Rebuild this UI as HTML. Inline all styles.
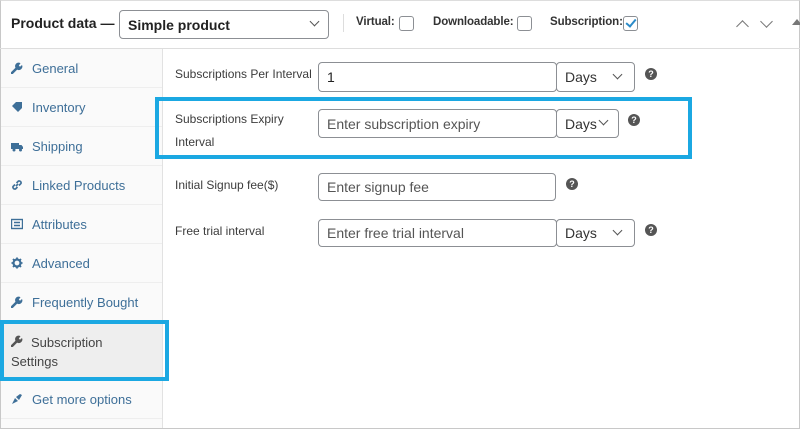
<!DOCTYPE html>
<html><head><style>
*{box-sizing:border-box;margin:0;padding:0}
body{width:800px;height:429px;background:#fff;font-family:"Liberation Sans",sans-serif;position:relative;overflow:hidden;color:#333}
.a{position:absolute}
.frame{left:0;top:0;width:800px;height:429px;border:1px solid #c8c8c8;border-top:1px solid #ddd}
.hdr{left:0;top:0;width:800px;height:49px;border-bottom:1px solid #ddd}
.side{left:1px;top:49px;width:162px;height:379px;background:#fafafa;border-right:1px solid #e2e2e2}
.item{position:absolute;left:0;width:161px;border-bottom:1px solid #eee;font-size:13px;color:#3e6f98;padding-left:31px}
.ic{position:absolute;left:10px;top:13px;width:12px;height:12px}
.lbl{font-size:12px;color:#3c3c3c}
.inp{border:1px solid #8c8f94;border-radius:4px;background:#fff;font-size:14px;color:#555;padding-left:8px;display:flex;align-items:center}
.sel{border:1px solid #8c8f94;border-radius:4px;background:#fff;font-size:14px;color:#333;padding-left:8px;display:flex;align-items:center}
.chev{position:absolute;width:7px;height:7px;border-right:1.5px solid #555;border-bottom:1.5px solid #555;transform:rotate(45deg)}
.q{width:12px;height:12px;border-radius:50%;background:#555;color:#fff;font-size:9px;font-weight:bold;text-align:center;line-height:12px}
.cb{width:15px;height:15px;border:1px solid #8c8f94;border-radius:3px;background:#fff}
.blue{border:4px solid #1ba8e2}
.hl{font-size:11.5px;font-weight:bold;color:#333;letter-spacing:-0.1px}
</style></head><body>
<svg width="0" height="0" style="position:absolute"><defs>
<g id="w"><path d="M1 11 L6 6" stroke="currentColor" stroke-width="2.6" stroke-linecap="round"/><path d="M5 6.5 A3.5 3.5 0 0 1 9.5 1.2 L7.8 3.5 L9 4.8 L11 3 A3.5 3.5 0 0 1 6 7.5Z" fill="currentColor"/></g>
</defs></svg>
<div class="a frame"></div>
<div class="a hdr"></div>
<div class="a" style="left:11px;top:15px;font-size:14px;font-weight:bold;color:#222">Product data —</div>
<div class="a sel" style="left:119px;top:10px;width:210px;height:29px;font-weight:bold;font-size:14px;color:#222">Simple product</div>
<div class="a chev" style="left:311px;top:18px"></div>
<div class="a" style="left:343px;top:14px;width:1px;height:18px;background:#ddd"></div>
<div class="a hl" style="left:356px;top:16px">Virtual:</div>
<div class="a cb" style="left:399px;top:16px"></div>
<div class="a hl" style="left:433px;top:16px">Downloadable:</div>
<div class="a cb" style="left:517px;top:16px"></div>
<div class="a hl" style="left:550px;top:16px">Subscription:</div>
<div class="a cb" style="left:623px;top:16px"></div>
<div class="a" style="left:628px;top:17px;width:6px;height:10px;border-right:2px solid #2b8bc9;border-bottom:2px solid #2b8bc9;transform:rotate(40deg)"></div>
<div class="a" style="left:738px;top:22px;width:9px;height:9px;border-left:1.5px solid #777;border-top:1.5px solid #777;transform:rotate(45deg)"></div>
<div class="a" style="left:762px;top:17px;width:9px;height:9px;border-right:1.5px solid #777;border-bottom:1.5px solid #777;transform:rotate(45deg)"></div>
<div class="a" style="left:792px;top:19px;width:0;height:0;border-left:5px solid transparent;border-right:5px solid transparent;border-bottom:6px solid #777"></div>

<div class="a side">
<div class="item" style="top:0;height:39px;padding-top:12px"><svg class="ic" viewBox="0 0 12 12" style="color:#3e6f98"><use href="#w"/></svg>General</div>
<div class="item" style="top:39px;height:39px;padding-top:12px"><svg class="ic" viewBox="0 0 12 12"><path d="M1 5 L5 1 L11 1 L11 7 L7 11Z" fill="#3e6f98" transform="rotate(0)"/></svg>Inventory</div>
<div class="item" style="top:78px;height:39px;padding-top:12px"><svg class="ic" viewBox="0 0 12 12"><rect x="0" y="3" width="8" height="6" fill="#3e6f98"/><path d="M8 5h2.5l1.5 2v2H8z" fill="#3e6f98"/><circle cx="3" cy="10" r="1.5" fill="#3e6f98"/><circle cx="9.5" cy="10" r="1.5" fill="#3e6f98"/></svg>Shipping</div>
<div class="item" style="top:117px;height:39px;padding-top:12px"><svg class="ic" viewBox="0 0 12 12"><path d="M5 7 L7 5 M4 5.5 L2 7.5 A2 2 0 0 0 4.5 10 L6.5 8 M8 6.5 L10 4.5 A2 2 0 0 0 7.5 2 L5.5 4" stroke="#3e6f98" stroke-width="1.6" fill="none"/></svg>Linked Products</div>
<div class="item" style="top:156px;height:39px;padding-top:12px"><svg class="ic" viewBox="0 0 12 12"><rect x="0.5" y="1.5" width="11" height="9" fill="none" stroke="#3e6f98" stroke-width="1.4"/><path d="M3 4.5h6M3 7.5h6" stroke="#3e6f98" stroke-width="1.4"/></svg>Attributes</div>
<div class="item" style="top:195px;height:39px;padding-top:12px"><svg class="ic" viewBox="0 0 12 12"><circle cx="6" cy="6" r="3.5" fill="none" stroke="#3e6f98" stroke-width="2.2"/><path d="M6 0.5v2M6 9.5v2M0.5 6h2M9.5 6h2M2 2l1.5 1.5M8.5 8.5L10 10M2 10l1.5-1.5M8.5 3.5L10 2" stroke="#3e6f98" stroke-width="1.8"/></svg>Advanced</div>
<div class="item" style="top:234px;height:39px;padding-top:12px"><svg class="ic" viewBox="0 0 12 12" style="color:#3e6f98"><use href="#w"/></svg>Frequently Bought</div>
<div class="item" style="top:273px;height:58px;background:#eee;color:#444;padding-top:11px;line-height:19px;padding-left:10px"><svg class="ic" viewBox="0 0 12 12" style="color:#555"><use href="#w"/></svg><span style="padding-left:20px">Subscription</span><br>Settings</div>
<div class="item" style="top:331px;height:39px;padding-top:12px"><svg class="ic" viewBox="0 0 12 12"><path d="M1 11 L4 5 L7 8Z M5 4 L8 7 L11 2 L9 1Z" fill="#3e6f98"/></svg>Get more options</div>
</div>
<div class="a blue" style="left:0;top:320px;width:169px;height:61px"></div>

<div class="a lbl" style="left:175px;top:67px">Subscriptions Per Interval</div>
<div class="a inp" style="left:318px;top:62px;width:239px;height:30px;color:#222">1</div>
<div class="a sel" style="left:556px;top:62px;width:79px;height:30px">Days</div>
<div class="a chev" style="left:614px;top:71px"></div>
<div class="a q" style="left:645px;top:68px">?</div>

<div class="a blue" style="left:155px;top:97px;width:537px;height:62px"></div>
<div class="a lbl" style="left:175px;top:108px;line-height:23px">Subscriptions Expiry<br>Interval</div>
<div class="a inp" style="left:318px;top:109px;width:239px;height:29px">Enter subscription expiry</div>
<div class="a sel" style="left:556px;top:109px;width:63px;height:29px">Days</div>
<div class="a chev" style="left:600px;top:117px"></div>
<div class="a q" style="left:628px;top:114px">?</div>

<div class="a lbl" style="left:175px;top:178px">Initial Signup fee($)</div>
<div class="a inp" style="left:318px;top:173px;width:238px;height:28px">Enter signup fee</div>
<div class="a q" style="left:566px;top:178px">?</div>

<div class="a lbl" style="left:175px;top:224px">Free trial interval</div>
<div class="a inp" style="left:318px;top:219px;width:239px;height:28px">Enter free trial interval</div>
<div class="a sel" style="left:556px;top:219px;width:79px;height:28px">Days</div>
<div class="a chev" style="left:614px;top:227px"></div>
<div class="a q" style="left:645px;top:224px">?</div>
</body></html>
